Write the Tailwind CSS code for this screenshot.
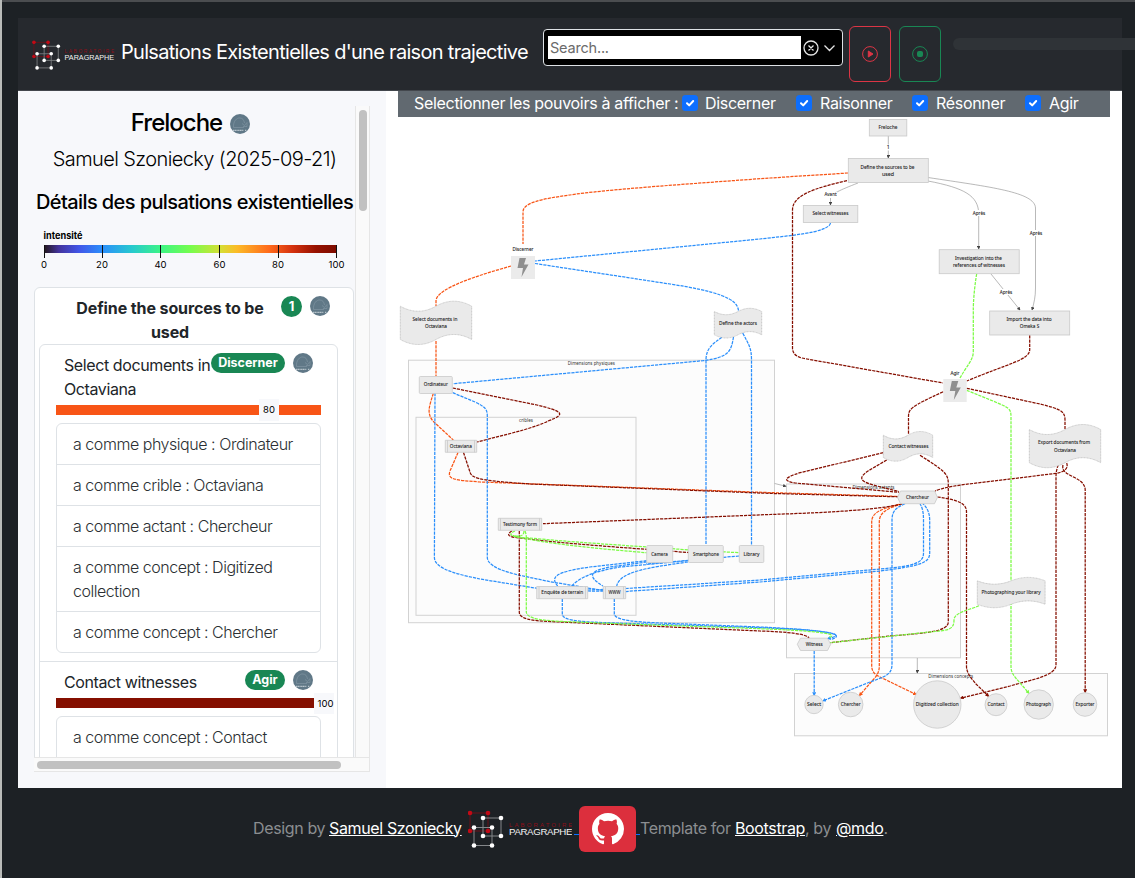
<!DOCTYPE html>
<html lang="fr">
<head>
<meta charset="utf-8">
<title>Pulsations Existentielles</title>
<script src="https://cdn.jsdelivr.net/npm/@tailwindcss/browser@4"></script>
</head>
<body class="h-[878px] w-[1135px] overflow-hidden border-l-2 border-[#b9bbb9] bg-[#1d2125] font-[Inter,'Liberation_Sans',sans-serif] text-base">
<svg class="hidden">
  <symbol id="logo" viewBox="0 0 106 42">
    <g fill="none" stroke-width="1"><path d="M2 3H20V21H2Z" stroke="#6b1019"/><path d="M15 8H33V26H15ZM6 17.500H24V35.500H6Z" stroke="#84878a"/></g>
    <g fill="#c20a16"><circle cx="2" cy="3" r="2.300"/><circle cx="20" cy="3" r="2.300"/><circle cx="2" cy="21" r="2.300"/><circle cx="20" cy="21" r="2.300"/></g>
    <g fill="#fff"><circle cx="15" cy="8" r="2.300"/><circle cx="33" cy="8" r="2.300"/><circle cx="15" cy="26" r="2.300"/><circle cx="33" cy="26" r="2.300"/><circle cx="6" cy="17.500" r="2.300"/><circle cx="24" cy="17.500" r="2.300"/><circle cx="6" cy="35.500" r="2.300"/><circle cx="24" cy="35.500" r="2.300"/></g>
    <g font-family="Liberation Sans, sans-serif"><text x="41" y="16.500" font-size="6" fill="#8d0f19" textLength="63">LABORATOIRE</text><text x="41" y="25" font-size="9.200" fill="#f2f2f2" textLength="63" lengthAdjust="spacingAndGlyphs">PARAGRAPHE</text></g>
  </symbol>
  <symbol id="omeka" viewBox="0 0 20 20">
    <circle cx="10" cy="10" r="10" fill="#607887"/><path d="M3.500 13.500C3 7 7 3.500 10 4C12.500 4 14 6 14.500 9M3.500 13.500H14M12 9.500L14.500 11.500L17 8.500V12.500H13" fill="none" stroke="#8499a6" stroke-width=".6"/>
    <path d="M3 16.300H13.500M15 16.300H16.500" stroke="#b9c5cc" stroke-width="1.300" stroke-dasharray="1.300 .4"/>
  </symbol>
  <symbol id="check" viewBox="0 0 16 16"><rect width="16" height="16" rx="3.500" fill="#0d6efd"/><path d="M5 8.200L7.200 10.400L11.200 6" fill="none" stroke="#fff" stroke-width="2" stroke-linecap="round" stroke-linejoin="round"/></symbol>
</svg>
<div class="flex h-full flex-col border-t-2 border-[#4b4d50] pl-4 pt-4">
  <header class="flex h-[73px] w-[1104px] shrink-0 items-start border-b border-[#43474d] bg-[#26292e] text-white">
    <svg class="ml-[14px] mt-[22px] h-[33px] w-[84px] shrink-0"><use href="#logo"/></svg>
    <h1 class="ml-[5px] mt-[19px] w-[422px] shrink-0 whitespace-nowrap text-[20px] leading-[30px] tracking-[-0.7px]">Pulsations Existentielles d'une raison trajective</h1>
    <div class="mt-[11px] flex h-[37px] w-[300px] shrink-0 items-center rounded border border-[#dee2e6] bg-black pl-1">
      <div class="h-[23px] w-[253px] bg-white pl-[2px] text-[14.500px] leading-[23px] tracking-[-0.2px] text-[#6b6b6b]">Search...</div>
      <svg class="ml-[2px] h-5 w-9" viewBox="0 0 36 20" fill="none" stroke="#e5e5e5" stroke-width="1.300"><circle cx="8" cy="10" r="7"/><path d="M5.500 7.500L10.500 12.500M10.500 7.500L5.500 12.500M21.500 7.500L26.500 12.500L31.500 7.500"/></svg>
    </div>
    <div class="ml-[6px] mt-2 flex h-14 w-[42px] shrink-0 items-center justify-center rounded-md border border-[#dc3545]"><svg class="size-4" viewBox="0 0 16 16" fill="none" stroke="#dc3545"><circle cx="8" cy="8" r="7.400"/><path d="M6.300 5L11 8L6.300 11Z" fill="#dc3545" stroke-linejoin="round"/></svg></div>
    <div class="ml-2 mt-2 flex h-14 w-[42px] shrink-0 items-center justify-center rounded-md border border-[#198754]"><svg class="size-4" viewBox="0 0 16 16" fill="none" stroke="#198754"><circle cx="8" cy="8" r="7.400"/><rect x="5.500" y="5.500" width="5" height="5" rx="1" fill="#198754"/></svg></div>
    <div class="ml-3 mt-5 h-3 w-[190px] shrink-0 rounded-md bg-[#2f3337]"></div>
  </header>
  <div class="flex h-[697px] w-[1104px] shrink-0 bg-white">
    <aside class="w-[368px] bg-[#f7f8fb] pl-4 pt-[15px]">
      <div class="flex h-[651px]">
        <div class="w-[321px] overflow-hidden text-black">
          <div class="flex h-[34px] items-center justify-center gap-2 pr-[20px] pl-3"><h2 class="text-[24px] leading-[32px] font-medium tracking-[-1px]">Freloche</h2><svg class="mt-[2px] size-5"><use href="#omeka"/></svg></div>
          <p class="mt-[4px] h-[30px] text-center text-[20px] leading-[30px] font-light tracking-[-0.6px]">Samuel Szoniecky (2025-09-21)</p>
          <h3 class="mt-[13px] ml-[2px] h-[30px] whitespace-nowrap text-[20px] leading-[30px] font-medium tracking-[-0.6px]">Détails des pulsations existentielles</h3>
          <svg class="block h-[70px] w-[320px]" viewBox="34 217 320 70" font-family="Inter, sans-serif" font-size="9.500">
            <defs><linearGradient id="turbo"><stop offset="0" stop-color="#23171b"/><stop offset=".05" stop-color="#43339c"/><stop offset=".12" stop-color="#4156e8"/><stop offset=".2" stop-color="#2b8ffb"/><stop offset=".3" stop-color="#27c9cf"/><stop offset=".4" stop-color="#3cf585"/><stop offset=".5" stop-color="#76fd4d"/><stop offset=".6" stop-color="#d3e035"/><stop offset=".66" stop-color="#fcbb27"/><stop offset=".77" stop-color="#ff6a1c"/><stop offset=".85" stop-color="#d4320f"/><stop offset=".93" stop-color="#961100"/><stop offset="1" stop-color="#7d0c00"/></linearGradient></defs>
            <text x="43.500" y="238.500" font-weight="700" textLength="39" lengthAdjust="spacingAndGlyphs">intensité</text>
            <rect x="44" y="245" width="292.500" height="8" fill="url(#turbo)"/>
            <path d="M44.500 245V258M102.500 245V258M160.500 245V258M219.500 245V258M278.500 245V258M336.500 245V258" stroke="#111"/>
            <g text-anchor="middle"><text x="44" y="268">0</text><text x="102" y="268">20</text><text x="160.500" y="268">40</text><text x="219.500" y="268">60</text><text x="278" y="268">80</text><text x="336.500" y="268">100</text></g>
          </svg>
          <section class="h-[600px] w-[320px] rounded-t-md border border-[#dee2e6] bg-white pl-1 text-[#212529]">
            <div class="flex h-14 pt-2">
              <h4 class="ml-[30px] w-[202px] text-center font-bold leading-6 tracking-[-0.1px]">Define the sources to be used</h4>
              <span class="ml-[10px] h-[21px] w-[21px] rounded-full bg-[#198754] text-center text-[13px] leading-[21px] font-bold text-white">1</span>
              <svg class="ml-2 size-5"><use href="#omeka"/></svg>
            </div>
            <div class="w-[299px] rounded-t-md border border-[#dee2e6] px-4">
              <div class="flex h-[60px] pt-2">
                <p class="ml-2 w-[147px] whitespace-nowrap leading-6 tracking-[-0.4px]">Select documents in<br>Octaviana</p>
                <span class="h-5 w-[74px] rounded-full bg-[#198754] text-center text-[12.500px] leading-5 font-bold text-white">Discerner</span>
                <svg class="ml-2 size-5"><use href="#omeka"/></svg>
              </div>
              <div class="flex h-[10px] w-[265px] items-center bg-[#f85516]"><span class="ml-[203px] h-[22px] w-5 bg-[#f7f8fb] text-center text-[9.500px] leading-[22px] text-black">80</span></div>
              <ul class="mt-2 w-[265px] divide-y divide-[#dee2e6] rounded-md border border-[#dee2e6] font-light leading-6 tracking-[-0.46px] text-[#2b2f33]">
                <li class="px-4 py-2">a comme physique : Ordinateur</li><li class="px-4 py-2">a comme crible : Octaviana</li><li class="px-4 py-2">a comme actant : Chercheur</li><li class="px-4 py-2">a comme concept : Digitized<br>collection</li><li class="px-4 py-2">a comme concept : Chercher</li>
              </ul>
              <div class="-mx-4 mt-[8px] border-t border-[#dee2e6]"></div>
              <div class="flex h-9 pt-2">
                <p class="ml-2 w-[181px] leading-6 tracking-[-0.4px]">Contact witnesses</p>
                <span class="h-5 w-10 rounded-full bg-[#198754] text-center text-[12.500px] leading-5 font-bold text-white">Agir</span>
                <svg class="ml-2 size-5"><use href="#omeka"/></svg>
              </div>
              <div class="flex h-[10px] w-[278px] items-center"><span class="h-[10px] w-[258px] bg-[#850f00]"></span><span class="h-[21px] w-5 bg-[#f7f8fb] text-center text-[9.500px] leading-[21px] text-black"><span class="ml-[3px]">100</span></span></div>
              <ul class="mt-2 w-[265px] rounded-t-md border border-[#dee2e6] font-light leading-6 tracking-[-0.46px] text-[#2b2f33]"><li class="h-24 px-4 py-2">a comme concept : Contact</li></ul>
            </div>
          </section>
        </div>
        <div class="w-[15px] border-x border-[#e6e6e6] bg-[#fafafa] pl-[3px] pt-[4px]"><div class="h-[101px] w-2 rounded bg-[#c1c1c1]"></div></div>
      </div>
      <div class="h-[15px] w-[336px] border-y border-r border-[#e6e6e6] bg-[#fafafa] pl-[3px] pt-[3px]"><div class="h-2 w-[304px] rounded bg-[#c1c1c1]"></div></div>
    </aside>
    <main class="w-[736px]">
      <div class="ml-3 flex h-[26px] w-[712px] items-start whitespace-nowrap bg-[#616970] pl-4 leading-6 tracking-[-0.31px] text-white">
        <span class="w-[268px]">Selectionner les pouvoirs à afficher :</span>
        <svg class="mt-1 size-4 shrink-0"><use href="#check"/></svg><span class="ml-[7px] w-[91px]">Discerner</span>
        <svg class="mt-1 size-4 shrink-0"><use href="#check"/></svg><span class="ml-2 w-[92px]">Raisonner</span>
        <svg class="mt-1 size-4 shrink-0"><use href="#check"/></svg><span class="ml-2 w-[89px]">Résonner</span>
        <svg class="mt-1 size-4 shrink-0"><use href="#check"/></svg><span class="ml-2">Agir</span>
      </div>
      <svg class="block h-[671px] w-[736px]" viewBox="386 117 736 671" font-family="Noto Sans, sans-serif" font-size="5.300">
        <defs><marker id="ar" viewBox="0 0 6 6" refX="5" refY="3" markerWidth="3.500" markerHeight="3.500" markerUnits="userSpaceOnUse" orient="auto"><path d="M0 0L6 3L0 6Z" fill="#444"/></marker>
        <marker id="ad" viewBox="0 0 6 6" refX="4" refY="3" markerWidth="4" markerHeight="4" markerUnits="userSpaceOnUse" orient="auto"><path d="M0 0L6 3L0 6Z" fill="#850f00"/></marker>
        <marker id="ab" viewBox="0 0 6 6" refX="4" refY="3" markerWidth="4" markerHeight="4" markerUnits="userSpaceOnUse" orient="auto"><path d="M0 0L6 3L0 6Z" fill="#2b8ffb"/></marker>
        <marker id="ao" viewBox="0 0 6 6" refX="4" refY="3" markerWidth="4" markerHeight="4" markerUnits="userSpaceOnUse" orient="auto"><path d="M0 0L6 3L0 6Z" fill="#f85516"/></marker>
        <marker id="ag" viewBox="0 0 6 6" refX="4" refY="3" markerWidth="4" markerHeight="4" markerUnits="userSpaceOnUse" orient="auto"><path d="M0 0L6 3L0 6Z" fill="#7cfb45"/></marker></defs>
        <!-- clusters -->
        <g fill="#fcfcfc" stroke="#d2d2d2" stroke-width="1"><rect x="408.500" y="360.200" width="366" height="262.500"/><rect x="416" y="417.300" width="220" height="198"/><rect x="786.500" y="484" width="174" height="173.800"/><rect x="794.500" y="673.500" width="313" height="62.300"/></g>
        <g fill="#333" text-anchor="middle"><text x="591.300" y="365.300" textLength="47" lengthAdjust="spacingAndGlyphs">Dimensions physiques</text><text x="526" y="422.300" textLength="14" lengthAdjust="spacingAndGlyphs">cribles</text><text x="873.500" y="489.200" textLength="42" lengthAdjust="spacingAndGlyphs">Dimensions actants</text><text x="950.700" y="678.300" textLength="45" lengthAdjust="spacingAndGlyphs">Dimensions concepts</text></g>
        <!-- sequence edges -->
        <g fill="none" stroke="#8a8a8a" stroke-width=".6">
          <path d="M888.300 136V158" marker-end="url(#ar)"/><path d="M858 183C840 190 831 194 830.500 198V205" marker-end="url(#ar)"/>
          <path d="M928 181C965 188 978 196 978.700 213V249" marker-end="url(#ar)"/><path d="M928 177.500C990 187 1035 192 1035.500 208V288C1035.500 297 1034 303 1032 310" marker-end="url(#ar)"/><path d="M991 274L1020 310" marker-end="url(#ar)"/>
          <path d="M774.700 483.500L786 486.300" marker-end="url(#ar)"/><path d="M917.300 658V673" marker-end="url(#ar)"/>
        </g>
        <g fill="none" stroke-width="1.250" stroke-dasharray="3.200 1">
          <g stroke="#f85516">
            <path d="M848 173L770 178C700 183 600 190 570 195C540 199 523 203 523 212V244"/><path d="M511 266C480 275 436 288 436 301V306M436 341V376"/>
            <path d="M433.300 393.300C430 405 425 414 435 423L453.300 440"/><path d="M458 452.500L450 471C447 480 455 480 480 482L770 492.600L898 496.400"/>
            <path d="M899 504.300C880 509 871.700 513 871.700 522V666C872 673 876 675 880 677L915.700 694.300" marker-end="url(#ao)"/><path d="M902 504C888 508 879.300 512 879.300 522V666C879.300 673 876 677 872 681L859.700 695.300" marker-end="url(#ao)"/>
          </g>
          <g stroke="#2b8ffb">
            <path d="M830.500 223C829 233 785 236 760 239L535 261"/><path d="M535 263.500L670 284C715 291 738 298 738.500 311"/>
            <path d="M722 337.300C712 344 706 349 706 360V545"/><path d="M733.500 337C731 352 729 357 703 360.700L453 383.700"/><path d="M742.700 333C749 345 751.500 348 751.500 360V545"/>
            <path d="M435 393L434.400 557C434 570 462 575 480 579L538 588.500"/><path d="M452.700 392.700L475 402C485 407 487.300 409 487.300 416V557C487 571 525 576 550 581.700L603 590.500"/>
            <path d="M646.700 560.700L590 567C555 572 550 577 557.700 586M688 560.700L620 567C595 571 580 577 571.700 586M646.700 562L610 567C588 571 588 577 603 586M688 562C645 568 620 572 616.700 586M739 556L646 564"/>
            <path d="M587.700 590L625.700 588.500L760 580L880 569C915 566 923.500 563 923.500 553V520C923.500 511 922 507 920 503.700"/>
            <path d="M587.700 591L625.700 591.500L760 582L880 571C920 566 929.700 563 929.700 553V521C929.700 512 927 508 923 503.700"/>
            <path d="M562.300 598.700V614C562 622 590 622 615 623L760 627.700C825 630 850 634 828 638.500" marker-end="url(#ab)"/><path d="M614.300 598.700V614C615 621 640 622 660 623L760 627C825 630 848 634 831 639.500"/>
            <path d="M905 503.700C895 508 892 512 892 520V664C892 674 887 676 870 682L823.300 700.700" marker-end="url(#ab)"/><path d="M814.200 651V695" marker-end="url(#ab)"/>
          </g>
          <g stroke="#850f00">
            <path d="M847 180.700C815 188 792.500 195 792.500 210V348C792.500 356 800 358 807 359L943 383"/><path d="M1029.700 335.300V350C1029 360 1010 363 966.700 381"/>
            <path d="M943.300 391.700C910 407 908.500 409 908.500 417V434"/><path d="M966.700 388.300L1040 404C1060 409 1065 411 1065 420V429"/>
            <path d="M452.700 388L537 405C561 411 568 414 548 421C543 424 530 428 520 431L477 442"/><path d="M463.500 452.500L470 472C471 480 490 481 530 484L770 493.400L898 496.800"/>
            <path d="M902 504C870 512 780 514 770 514.500L543 523.700"/>
            <path d="M883.300 452.700L800 472.700C783 478 783 481 795 483L899 492.300"/><path d="M886.700 460L868 471C858 478 860 481 873 485L899 491.500"/><path d="M920 455.300C945 471 948.300 474 948.300 484V622C948 632 925 633 890 636L830 642.700"/>
            <path d="M1066.700 463C1069 470 1062 472 1056.700 473.300L973 483.500C950 486 940 489 935 491"/><path d="M1058.300 465C1057 468 1056 472 1056 477V665C1056 676 1030 680 1010 686L961 698" marker-end="url(#ad)"/><path d="M1063 465C1060 477 1085 476 1085.200 490V692" marker-end="url(#ad)"/>
            <path d="M937.300 497C960 500 966.500 504 966.500 512V667C967 674 972 679 976 684L988.300 696" marker-end="url(#ad)"/>
            <path d="M511.700 531C506 535 508 537 520 538C550 542 600 546 646.700 549.300L690 552.700"/><path d="M519.300 531V612C519 621 540 621 560 622L760 631C790 632 806 634 809 638"/>
          </g>
          <g stroke="#7cfb45">
            <path d="M976.700 273.700C974 290 973.300 303 973.300 310V352C973 360 968 364 960 378"/><path d="M966.700 390.300L993 401C1009 408 1011 408 1011 417V667C1011 675 1018 680 1028.700 693" marker-end="url(#ag)"/>
            <path d="M515 531C506 535 512 537 530 538C570 542 620 545 690 550L739 552.700"/><path d="M524 531C524 540 510 534 514 536C540 543 600 549 646.700 552.700"/>
            <path d="M525 531C527 536 526.300 540 526.300 548V612C527 622 560 621 600 623L760 628.700C820 631 840 634 829 637.500"/>
            <path d="M979 605.700C970 610 954 612 954 620C954 632 945 630 920 633L830 642.700"/>
          </g>
        </g>
        <!-- nodes -->
        <g fill="#eaeaea" stroke="#c9c9c9" stroke-width=".8">
          <rect x="869.300" y="119.500" width="37.500" height="16.500"/><rect x="848.300" y="158.500" width="80" height="24"/><rect x="803.300" y="205.500" width="54.500" height="17"/><rect x="939.200" y="249.700" width="80" height="24"/><rect x="989.700" y="311" width="80" height="24"/>
          <rect x="419.300" y="376.500" width="33" height="17" rx="1"/><rect x="646.700" y="545.500" width="26" height="17" rx="1"/><rect x="688.300" y="545.500" width="35" height="17" rx="1"/><rect x="739.300" y="545.500" width="24.500" height="17" rx="1"/>
          <path d="M445.300 440.300H476.700V452.300H445.300ZM447.500 440.300V452.300M474.500 440.300V452.300M498.300 518.300H541.700V530.300H498.300ZM500.500 518.300V530.300M539.500 518.300V530.300M536.700 586.500H587.700V598.700H536.700ZM539 586.500V598.700M585.500 586.500V598.700M603.300 586.500H625.700V598.700H603.300ZM605.500 586.500V598.700M623.500 586.500V598.700"/>
          <path d="M900.500 491H934.500L937.500 497.300L934.500 503.700H900.500L897.500 497.300ZM800.500 638.200H827.500L830.700 644.300L827.500 650.500H800.500L797.300 644.300Z"/>
          <path stroke="#aaa" stroke-width=".6" stroke-dasharray="1 .5" d="M400.300 306.200q17.850 10 35.700 0t35.700 0V339.500q-17.850 -10 -35.700 0t-35.700 0ZM714.300 311.500q11.850 6.400 23.700 0t23.700 0V334.800q-11.850 -6.400 -23.700 0t-23.700 0ZM883.300 435.200q12.350 7.400 24.700 0t24.700 0V457.500q-12.350 -7.400 -24.700 0t-24.700 0ZM1029.300 429.500q17.850 10 35.700 0t35.700 0V462.700q-17.850 -10 -35.700 0t-35.700 0ZM977.300 580.800q16.950 6.800 33.900 0t33.900 0V604.300q-16.950 -6.800 -33.900 0t-33.900 0Z"/>
          <circle cx="814" cy="704.500" r="9.200"/><circle cx="850.700" cy="704.500" r="12.300"/><circle cx="937.300" cy="704.500" r="23.700"/><circle cx="996" cy="704.700" r="11"/><circle cx="1038.700" cy="704.500" r="14.700"/><circle cx="1085" cy="704.500" r="11.800"/>
        </g>
        <path fill="#ebebeb" d="M511 256H535V279H511ZM943.300 379H966.700V402H943.300Z"/>
        <path fill="#8f8f8f" d="M519.500 258H526L524 264.500H528.500L521.500 277L523 268H517.500ZM951.800 381H958.300L956.300 387.500H960.800L953.800 400L955.300 391H949.800Z"/>
        <g fill="#fff"><rect x="886" y="144.500" width="4.500" height="6"/><rect x="824" y="192" width="13" height="6"/><rect x="972.500" y="210" width="13" height="6"/><rect x="1029.500" y="230" width="13" height="6"/><rect x="999.500" y="289" width="13" height="6"/></g>
        <g fill="#222" stroke="#222" stroke-width=".1" text-anchor="middle">
          <text x="888" y="129.300" textLength="19" lengthAdjust="spacingAndGlyphs">Freloche</text><text x="888.300" y="149.200">1</text>
          <text x="887.500" y="169" textLength="54" lengthAdjust="spacingAndGlyphs">Define the sources to be</text><text x="888" y="176">used</text>
          <text x="830.500" y="196.300" textLength="12" lengthAdjust="spacingAndGlyphs">Avant</text><text x="830.500" y="215.200" textLength="36" lengthAdjust="spacingAndGlyphs">Select witnesses</text>
          <text x="979" y="215.300" textLength="12.500" lengthAdjust="spacingAndGlyphs">Après</text><text x="1036" y="235" textLength="12.500" lengthAdjust="spacingAndGlyphs">Après</text><text x="1006" y="294.200" textLength="12.500" lengthAdjust="spacingAndGlyphs">Après</text>
          <text x="978.500" y="260" textLength="47" lengthAdjust="spacingAndGlyphs">Investigation into the</text><text x="979" y="267" textLength="52" lengthAdjust="spacingAndGlyphs">references of witnesses</text>
          <text x="1029" y="321" textLength="45" lengthAdjust="spacingAndGlyphs">Import the data into</text><text x="1029.500" y="328" textLength="19.500" lengthAdjust="spacingAndGlyphs">Omeka S</text>
          <text x="523" y="251" textLength="21" lengthAdjust="spacingAndGlyphs">Discerner</text><text x="955" y="374.500" textLength="9" lengthAdjust="spacingAndGlyphs">Agir</text>
          <text x="435" y="321" textLength="45" lengthAdjust="spacingAndGlyphs">Select documents in</text><text x="436" y="328" textLength="22" lengthAdjust="spacingAndGlyphs">Octaviana</text>
          <text x="738" y="325.200" textLength="38" lengthAdjust="spacingAndGlyphs">Define the actors</text><text x="435.800" y="386.200" textLength="24" lengthAdjust="spacingAndGlyphs">Ordinateur</text><text x="460.800" y="448.200" textLength="22" lengthAdjust="spacingAndGlyphs">Octaviana</text>
          <text x="520" y="526.200" textLength="34" lengthAdjust="spacingAndGlyphs">Testimony form</text><text x="659.500" y="556" textLength="16.500" lengthAdjust="spacingAndGlyphs">Camera</text><text x="706" y="556" textLength="26" lengthAdjust="spacingAndGlyphs">Smartphone</text><text x="751.500" y="556" textLength="16" lengthAdjust="spacingAndGlyphs">Library</text>
          <text x="562.300" y="594.200" textLength="42" lengthAdjust="spacingAndGlyphs">Enquête de terrain</text><text x="614.500" y="594.200" textLength="12" lengthAdjust="spacingAndGlyphs">WWW</text>
          <text x="908.500" y="448.200" textLength="40" lengthAdjust="spacingAndGlyphs">Contact witnesses</text><text x="1064" y="444.200" textLength="52" lengthAdjust="spacingAndGlyphs">Export documents from</text><text x="1065" y="452" textLength="22" lengthAdjust="spacingAndGlyphs">Octaviana</text>
          <text x="917.500" y="499.200" textLength="23" lengthAdjust="spacingAndGlyphs">Chercheur</text><text x="1011" y="594.200" textLength="59" lengthAdjust="spacingAndGlyphs">Photographing your library</text><text x="814.200" y="646.200" textLength="17" lengthAdjust="spacingAndGlyphs">Witness</text>
          <text x="814" y="706.200" textLength="14" lengthAdjust="spacingAndGlyphs">Select</text><text x="850.700" y="706.200" textLength="20" lengthAdjust="spacingAndGlyphs">Chercher</text><text x="937.300" y="706.200" textLength="43" lengthAdjust="spacingAndGlyphs">Digitized collection</text><text x="996" y="706.200" textLength="17" lengthAdjust="spacingAndGlyphs">Contact</text><text x="1038.500" y="706.200" textLength="25" lengthAdjust="spacingAndGlyphs">Photograph</text><text x="1085" y="706.200" textLength="19" lengthAdjust="spacingAndGlyphs">Exporter</text>
        </g>
      </svg>
    </main>
  </div>
  <footer class="mt-px flex h-[80px] shrink-0 items-center whitespace-nowrap pl-[235px] leading-6 tracking-[-0.36px] text-[#8b8e91]">
    <span class="-mt-[3px] w-[76px] shrink-0">Design by</span><a class="-mt-[3px] w-[139px] shrink-0 text-white"><span class="underline">Samuel Szoniecky</span></a>
    <svg class="mt-1 h-[42px] w-[104px] shrink-0" viewBox="0 0 104 42"><use href="#logo" width="106" height="42"/></svg>
    <span class="mt-[10px] ml-[2px] h-px w-[5px] shrink-0 bg-[#0d6efd]"></span>
    <a class="flex h-[46px] w-[57px] shrink-0 items-center justify-center rounded-md bg-[#dc2f3d]"><svg class="size-8" viewBox="0 0 16 16" fill="#fff"><path d="M8 0C3.580 0 0 3.580 0 8c0 3.540 2.290 6.530 5.470 7.590.4.070.55-.17.55-.38 0-.19-.01-.82-.01-1.490-2.010.37-2.530-.49-2.690-.94-.09-.23-.48-.94-.82-1.130-.28-.15-.68-.52-.01-.53.63-.01 1.080.58 1.230.82.72 1.210 1.870.87 2.330.66.07-.52.28-.87.51-1.070-1.780-.2-3.640-.89-3.640-3.950 0-.87.31-1.590.82-2.150-.08-.2-.36-1.020.08-2.120 0 0 .67-.21 2.200.82.64-.18 1.320-.27 2-.27s1.360.09 2 .27c1.530-1.040 2.200-.82 2.200-.82.44 1.100.16 1.920.08 2.120.51.56.82 1.270.82 2.150 0 3.070-1.870 3.750-3.650 3.950.29.25.54.73.54 1.480 0 1.070-.01 1.930-.01 2.200 0 .21.15.46.55.38A8.010 8.010 0 0 0 16 8c0-4.420-3.580-8-8-8"/></svg></a>
    <span class="mt-[10px] h-px w-[4px] shrink-0 bg-[#0d6efd]"></span>
    <span class="-mt-[3px] w-[95px] shrink-0">Template for</span><span class="-mt-[3px] w-[101px] shrink-0"><a class="text-white underline">Bootstrap</a>, by</span><span class="-mt-[3px]"><a class="text-white underline">@mdo</a>.</span>
  </footer>
</div>
</body>
</html>
